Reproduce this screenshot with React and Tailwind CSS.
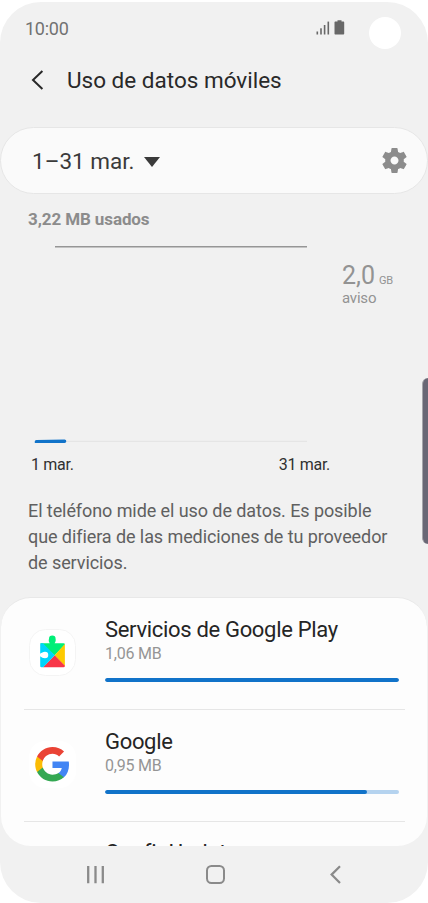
const StatusBar = () => (
  <div className="flex h-[54px] shrink-0 items-start justify-between pl-[25px] pr-[27px]">
    <span className="pt-[15px] text-[18px] leading-6 tracking-[-0.25px] text-[#727272]">10:00</span>
    <div className="flex items-start">
      <svg className="mt-[18px]" width="30" height="15" viewBox="0 0 30 15" fill="#686868">
        <rect x="0.500" y="11.500" width="1.600" height="3" />
        <rect x="4.200" y="8.300" width="1.600" height="6.200" />
        <rect x="7.800" y="5" width="1.600" height="9.500" />
        <rect x="11.500" y="1.600" width="1.600" height="12.900" />
        <path d="M21.500 0.300h4v1.300h1.700c.6 0 1 .4 1 1v10.900c0 .6-.4 1-1 1h-7.700c-.6 0-1-.4-1-1V2.600c0-.6.4-1 1-1h2z" />
      </svg>
      <div className="ml-[23px] mt-[15px] h-8 w-8 rounded-full bg-white" />
    </div>
  </div>
);

const PlayServicesIcon = () => (
  <svg width="48" height="48" viewBox="0 0 48 48">
    <rect x="0.500" y="0.500" width="46" height="46" rx="16" fill="#fff" stroke="#f4f4f4" />
    <path d="M11.500 14.200H20.800C19.900 12.800 19.400 11.500 20 9.700A3.300 3.300 0 0 1 26.600 9.700C27 11.500 26.500 12.800 25.600 14.200H34.500Q35.900 14.200 35.900 15.600L25.700 26.300L11.500 15Z" fill="#00ef77" />
    <path d="M35.900 15V37.300L25.700 26.300Z" fill="#fdca00" />
    <path d="M25.700 26.300L35.900 36.800Q35.900 38.300 34.500 38.300H14Z" fill="#f83648" />
    <path d="M11.200 15.500Q11.200 14.200 12.500 14.200H14L25.700 26.300L14.200 38.300H12.500Q11.200 38.300 11.200 37V27.200C12.600 28.200 14 29.200 16 29.200A3.200 3.200 0 0 0 16 22.700C14 22.700 12.600 23.700 11.200 24.700Z" fill="#00d5fb" />
  </svg>
);

const GoogleIcon = () => (
  <svg width="48" height="48" viewBox="0 0 48 48">
    <rect width="47" height="47" rx="16" fill="#fff" />
    <g transform="translate(6.200 6) scale(1.440)">
      <path fill="#4285F4" d="M23.490 12.270c0-.79-.07-1.540-.19-2.270H12v4.510h6.470c-.29 1.480-1.140 2.730-2.400 3.580v3h3.860c2.260-2.090 3.560-5.170 3.560-8.820z" />
      <path fill="#34A853" d="M12 24c3.240 0 5.950-1.080 7.930-2.910l-3.860-3c-1.080.72-2.450 1.160-4.070 1.160-3.130 0-5.780-2.110-6.730-4.960H1.290v3.090C3.260 21.300 7.310 24 12 24z" />
      <path fill="#FBBC05" d="M5.270 14.290c-.25-.72-.38-1.490-.38-2.290s.14-1.570.38-2.290V6.620H1.290A11.860 11.860 0 0 0 0 12c0 1.940.47 3.760 1.290 5.380l3.980-3.090z" />
      <path fill="#EA4335" d="M12 4.750c1.770 0 3.350.61 4.600 1.800l3.420-3.420C17.950 1.190 15.240 0 12 0 7.310 0 3.260 2.700 1.290 6.620l3.980 3.090C6.220 6.860 8.870 4.750 12 4.750z" />
    </g>
  </svg>
);

const apps = [
  { name: 'Servicios de Google Play', usage: '1,06 MB', percent: 100, Icon: PlayServicesIcon },
  { name: 'Google', usage: '0,95 MB', percent: 89, Icon: GoogleIcon },
];

const AppRow = ({ name, usage, percent, Icon }) => (
  <div className="ml-[23px] mr-[22px] flex h-28 shrink-0 border-b border-[#e6e6e6]">
    <div className="ml-[5px] mt-[31px] w-[76px] shrink-0">
      <Icon />
    </div>
    <div className="mr-[6px] flex-1 pt-[18px]">
      <p className="text-[22px] leading-[27px] tracking-[-0.32px] text-[#252525]">{name}</p>
      <p className="text-[16px] leading-[22px] tracking-[-0.2px] text-[#959595]">{usage}</p>
      <div className="mt-[13px] h-1 overflow-hidden rounded-full bg-[#b5d3ef]">
        <div className="h-full rounded-full bg-[#1173c9]" style={{ width: `${percent}%` }} />
      </div>
    </div>
  </div>
);

const UsageChart = () => (
  <section className="shrink-0 pl-7">
    <p className="pt-[13px] text-[17px] font-bold leading-6 tracking-[-0.1px] text-[#8c8c8c]">3,22 MB usados</p>
    <div className="flex h-[212px] pt-[15px]">
      <svg width="280" height="197" viewBox="0 0 280 197">
        <path d="M27 0.800H279" stroke="#969696" strokeWidth="1.500" />
        <path d="M8 195.300H279" stroke="#e5e5e5" strokeWidth="1.300" />
        <path d="M8.500 195.900L36.500 195.200" stroke="#1173c9" strokeWidth="3.600" strokeLinecap="round" />
      </svg>
      <div className="ml-[34px] pt-[17px] text-[#939393]">
        <div className="flex items-baseline gap-1 leading-[26px]">
          <span className="text-[25px] leading-[26px]">2,0</span>
          <span className="text-[11px] leading-[14px] tracking-[-0.3px]">GB</span>
        </div>
        <p className="text-[15px] leading-[18px] tracking-[-0.2px]">aviso</p>
      </div>
    </div>
    <div className="flex w-[302px] justify-between pl-[3px] pt-[12px] text-[16px] leading-[20px] tracking-[-0.3px] text-[#303030]">
      <span>1 mar.</span>
      <span>31 mar.</span>
    </div>
  </section>
);

const NavBar = () => (
  <nav className="flex h-[57px] shrink-0 items-center justify-center gap-[100px] pl-[3px]">
    <svg width="20" height="20" viewBox="0 0 20 20" stroke="#8a8a8a" strokeWidth="2.300">
      <path d="M2.200 1V18.200M9.500 1V18.200M16.800 1V18.200" />
    </svg>
    <svg width="20" height="20" viewBox="0 0 20 20" fill="none" stroke="#8a8a8a" strokeWidth="2">
      <rect x="1" y="1" width="17" height="17" rx="4.500" />
    </svg>
    <svg width="20" height="20" viewBox="0 0 20 20" fill="none" stroke="#8a8a8a" strokeWidth="2.200">
      <path d="M14 1.200L5.600 9.600L14 18" />
    </svg>
  </nav>
);

export default function App() {
  return (
    <div className="h-[903px] w-[428px] overflow-hidden bg-white pt-[2px] font-['Roboto',sans-serif]">
      <div className="relative flex h-[901px] flex-col overflow-hidden rounded-[41px] bg-[#f1f1f1]">
        <StatusBar />

        <header className="flex h-12 shrink-0 items-center pl-[31px]">
          <svg width="13" height="20" viewBox="0 0 13 20" fill="none" stroke="#292929" strokeWidth="2">
            <path d="M11.400 1L2 10L11.400 19" />
          </svg>
          <h1 className="ml-[23px] pt-[2px] text-[22.500px] text-[#292929]">Uso de datos móviles</h1>
        </header>

        <div className="mt-[23px] flex h-[67px] shrink-0 items-center justify-between rounded-full border border-[#e6e6e6] bg-[#fafafa] pl-[31px] pr-[17px]">
          <div className="flex items-center pt-[2px] text-[22.500px] text-[#3a3a3a]">
            1–31 mar.
            <svg className="ml-[10px]" width="16" height="10" viewBox="0 0 16 10" fill="#3a3a3a">
              <path d="M0 0H16L8 10z" />
            </svg>
          </div>
          <svg className="h-[31px] w-[31px]" viewBox="0 0 24 24" fill="#8c8c8c">
            <path d="M19.140 12.940c.04-.3.060-.61.060-.94 0-.32-.02-.64-.07-.94l2.030-1.580c.18-.14.230-.41.120-.61l-1.920-3.320c-.12-.22-.37-.29-.59-.22l-2.390.96c-.5-.38-1.030-.7-1.620-.94l-.36-2.540c-.04-.24-.24-.41-.48-.41h-3.840c-.24 0-.43.170-.47.410l-.36 2.540c-.59.240-1.130.570-1.620.940l-2.390-.96c-.22-.08-.47 0-.59.220L2.740 8.870c-.12.210-.08.470.120.610l2.030 1.580c-.05.300-.09.630-.09.940s.02.640.07.940l-2.030 1.580c-.18.140-.23.410-.12.610l1.920 3.320c.12.220.37.290.59.220l2.390-.96c.5.380 1.030.700 1.620.940l.36 2.540c.05.240.240.410.480.410h3.840c.24 0 .44-.17.47-.41l.36-2.540c.59-.24 1.130-.56 1.620-.94l2.390.96c.22.080.470 0 .59-.22l1.920-3.320c.12-.22.070-.47-.12-.61l-2.010-1.580zM12 15.100c-1.700 0-3.100-1.400-3.100-3.100s1.400-3.100 3.100-3.100 3.100 1.400 3.100 3.100-1.400 3.100-3.100 3.100z" />
          </svg>
        </div>

        <UsageChart />

        <p className="mt-[23px] w-[400px] shrink-0 pl-7 text-[18px] leading-[26px] tracking-[-0.08px] text-[#606060]">
          El teléfono mide el uso de datos. Es posible que difiera de las mediciones de tu proveedor de servicios.
        </p>

        <section className="mx-px mt-auto flex h-[249px] shrink-0 flex-col overflow-hidden rounded-[30px] border-t border-[#e8e8e8] bg-[#fdfdfd]">
          {apps.map((app) => (
            <AppRow key={app.name} {...app} />
          ))}
          <p className="ml-[104px] shrink-0 pt-[17px] text-[22px] leading-[28px] tracking-[-0.1px] text-[#252525]">
            ConfigUpdater
          </p>
        </section>

        <NavBar />

        {/* edge panel handle */}
        <div className="absolute right-0 top-[376px] h-[166px] w-[6px] rounded-l-[6px] border-l border-[#a5a5aa] bg-[#696775]" />
      </div>
    </div>
  );
}
